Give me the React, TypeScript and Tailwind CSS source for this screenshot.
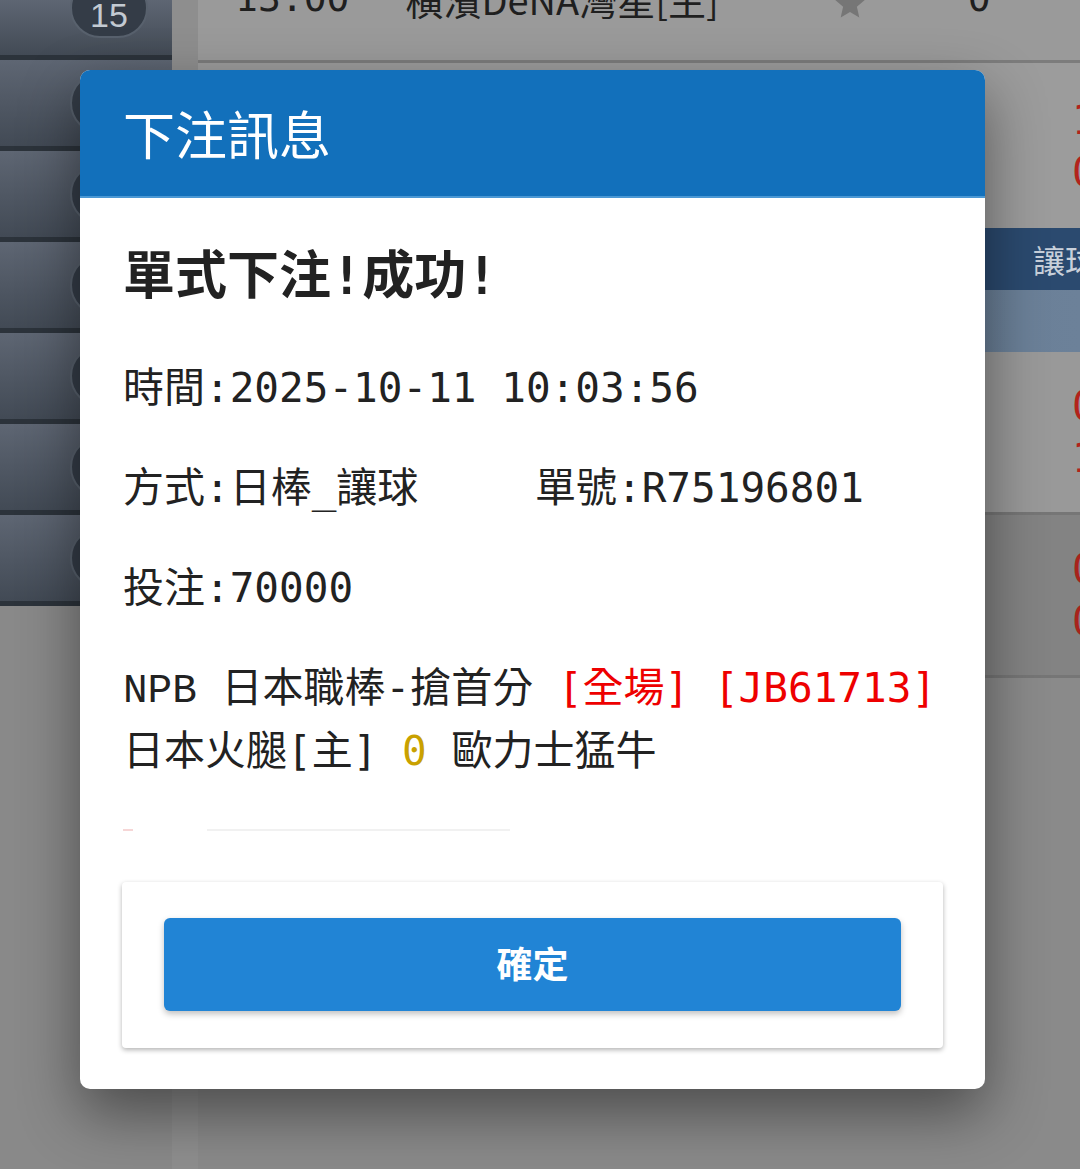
const mono = { fontFamily: '"DejaVu Sans Mono", "Noto Sans CJK TC", monospace' };

function SideRow({ first, label }: { first?: boolean; label?: string }) {
  return (
    <div
      className={
        "flex border-b-[5px] border-[#2c333b] bg-gradient-to-b from-[#5e6673] to-[#424a55] pl-[70px] " +
        (first ? "h-[60px] items-start" : "h-[91px] items-center")
      }
    >
      <div
        className={
          "flex w-[78px] items-center justify-center rounded-full border-2 border-[#58616d] bg-[#343c47] text-[34px] text-[#c3cad2] " +
          (first ? "-mt-[22px] h-[60px] pt-[14px]" : "h-[62px]")
        }
        style={{ fontFamily: '"Liberation Sans", sans-serif' }}
      >
        {label}
      </div>
    </div>
  );
}

function Background() {
  return (
    <div className="flex h-full">
      <div className="flex w-[172px] shrink-0 flex-col bg-[#898989]">
        <SideRow first label="15" />
        <SideRow />
        <SideRow />
        <SideRow />
        <SideRow />
        <SideRow />
        <SideRow />
      </div>
      <div className="w-[26px] shrink-0 bg-[#8e8e8e]" />
      <div className="flex min-w-0 flex-1 flex-col bg-[#8a8a8a] text-[#1f1f1f]">
        <div className="flex h-[63px] items-start border-b-[3px] border-[#7c7c7c] bg-[#9a9a9a]">
          <div className="-mt-[30px] flex items-center whitespace-nowrap text-[38px]">
            <span className="ml-[37px]" style={mono}>13:00</span>
            <span className="ml-[56px]" style={{ fontFamily: '"Noto Sans CJK TC", sans-serif' }}>
              橫濱DeNA灣星[主]
            </span>
            <svg className="ml-[113px] mt-[10px]" width="36" height="36" viewBox="0 0 24 24">
              <path
                fill="#767676"
                d="M12 2l2.9 6.6 7.1.6-5.4 4.7 1.6 7.1L12 17.3 5.8 21l1.6-7.1L2 9.2l7.1-.6z"
              />
            </svg>
            <span className="ml-[100px]" style={mono}>0</span>
          </div>
        </div>
        <div className="flex h-[165px] flex-col items-end justify-center gap-[6px] bg-[#9c9c9c] text-[40px] leading-[46px] text-[#b3231b]">
          <span className="-mr-[16px]" style={mono}>1</span>
          <span className="-mr-[16px]" style={mono}>0</span>
        </div>
        <div
          className="flex h-[62px] items-center bg-[#2b4a6f] pl-[835px] text-[32px] text-[#c9d1db]"
          style={{ fontFamily: '"Noto Sans CJK TC", sans-serif' }}
        >
          <span className="whitespace-nowrap">讓球</span>
        </div>
        <div className="h-[62px] bg-gradient-to-r from-[#5d7389] to-[#6c8199]" />
        <div className="flex h-[160px] flex-col items-end justify-center gap-[6px] bg-[#999999] text-[40px] leading-[46px] text-[#b3231b]">
          <span className="-mr-[16px]" style={mono}>0</span>
          <span className="-mr-[16px]" style={mono}>1</span>
        </div>
        <div className="flex h-[166px] flex-col items-end justify-center gap-[6px] border-y-[3px] border-[#767676] bg-[#838383] text-[40px] leading-[46px] text-[#a8231b]">
          <span className="-mr-[16px]" style={mono}>0</span>
          <span className="-mr-[16px]" style={mono}>0</span>
        </div>
        <div className="flex-1 bg-[#8a8a8a]" />
      </div>
    </div>
  );
}

function Dialog() {
  return (
    <div className="absolute left-[80px] top-[70px] w-[905px] overflow-hidden rounded-[10px] bg-white shadow-[0_24px_60px_rgba(0,0,0,0.45)]">
      <div
        className="flex h-[128px] items-center border-b-2 border-[#4b98d4] bg-[#1270bb] pl-[43px] text-[52px] text-white"
        style={{ fontFamily: '"Noto Sans CJK TC", sans-serif' }}
      >
        下注訊息
      </div>
      <div className="px-[42px] pb-[41px] text-[#222]">
        <div className="pl-px">
          <p className="mt-[48px] text-[52px] font-bold leading-[60px]" style={mono}>
            單式下注!成功!
          </p>
          <div className="text-[41px] leading-[60px]" style={mono}>
            <p className="mt-[52px]">時間:2025-10-11 10:03:56</p>
            <p className="mt-[40px] whitespace-nowrap">
              <span className="inline-block w-[412px]">方式:日棒_讓球</span>
              單號:R75196801
            </p>
            <p className="mt-[40px]">投注:70000</p>
            <p className="mt-[40px] whitespace-nowrap">
              <span style={{ fontFamily: '"Liberation Mono", monospace' }}>NPB</span> 日本職棒-搶首分{" "}
              <span className="text-[#ee0000]">[全場]</span>{" "}
              <span className="text-[#ee0000]">[JB61713]</span>
            </p>
            <p className="whitespace-nowrap">
              日本火腿[主] <span className="text-[#c9a100]">0</span> 歐力士猛牛
            </p>
          </div>
          <div className="mt-[48px] flex items-center">
            <div className="h-[2px] w-[10px] bg-[#f6d6d6]" />
            <div className="ml-[74px] h-[2px] w-[303px] bg-[#f1f1f1]" />
          </div>
        </div>
        <div className="mt-[51px] rounded-[4px] bg-white px-[42px] pb-[37px] pt-[36px] shadow-[0_2px_5px_rgba(0,0,0,0.3)]">
          <button
            className="flex h-[93px] w-full items-center justify-center rounded-[6px] bg-[#2184d5] pb-[6px] text-[36px] font-bold text-white shadow-[0_3px_6px_rgba(0,0,0,0.25)]"
            style={{ fontFamily: '"Noto Sans CJK TC", sans-serif' }}
          >
            確定
          </button>
        </div>
      </div>
    </div>
  );
}

export default function App() {
  return (
    <div className="relative h-[1169px] w-[1080px] overflow-hidden bg-[#888888]">
      <Background />
      <Dialog />
    </div>
  );
}
